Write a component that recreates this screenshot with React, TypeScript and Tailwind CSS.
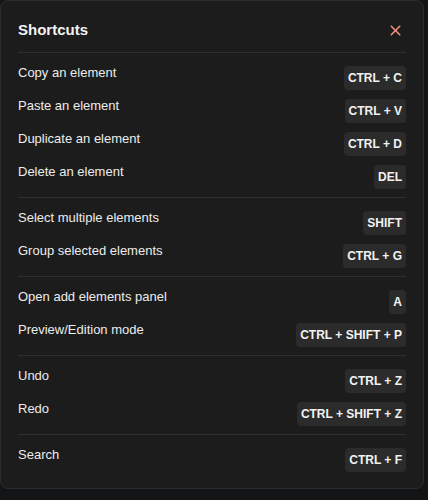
import { X } from "lucide-react";

type Shortcut = { label: string; keys: string };

const sections: Shortcut[][] = [
  [
    { label: "Copy an element", keys: "CTRL + C" },
    { label: "Paste an element", keys: "CTRL + V" },
    { label: "Duplicate an element", keys: "CTRL + D" },
    { label: "Delete an element", keys: "DEL" },
  ],
  [
    { label: "Select multiple elements", keys: "SHIFT" },
    { label: "Group selected elements", keys: "CTRL + G" },
  ],
  [
    { label: "Open add elements panel", keys: "A" },
    { label: "Preview/Edition mode", keys: "CTRL + SHIFT + P" },
  ],
  [
    { label: "Undo", keys: "CTRL + Z" },
    { label: "Redo", keys: "CTRL + SHIFT + Z" },
  ],
  [{ label: "Search", keys: "CTRL + F" }],
];

const ShortcutRow = ({ label, keys }: Shortcut) => (
  <div className="flex justify-between items-start">
    <span className="text-[13px] leading-5 text-[#ececec]">{label}</span>
    <kbd className="mt-[3px] h-6 px-[4px] flex items-center rounded-[4px] bg-[#2b2b2b] text-[12px] font-bold text-[#f2f2f2] font-['Liberation_Sans',Arial,sans-serif]">
      {keys}
    </kbd>
  </div>
);

export default function App() {
  return (
    <div className="w-[428px] h-[500px] bg-[#131416] font-['Liberation_Sans',Arial,sans-serif]">
      <div className="w-[424px] h-[489px] bg-[#1c1c1c] border border-[#2d2d2d] rounded-[8px] px-[17px] pt-[19px] pb-4">
        <div className="flex items-center justify-between h-5">
          <h2 className="text-[15px] font-bold text-[#f2f2f2]">Shortcuts</h2>
          <button className="text-[#f0907a] mr-[2px]">
            <X size={17} strokeWidth={2.2} />
          </button>
        </div>
        <div className="border-b border-[#2f2f2f] mt-[12px]" />
        {sections.map((rows, i) => (
          <div key={i}>
            {i > 0 && <div className="border-b border-[#2f2f2f] mt-[8px]" />}
            <div className="flex flex-col gap-[6px] pt-[10px]">
              {rows.map((r) => (
                <ShortcutRow key={r.label} {...r} />
              ))}
            </div>
          </div>
        ))}
      </div>
    </div>
  );
}
